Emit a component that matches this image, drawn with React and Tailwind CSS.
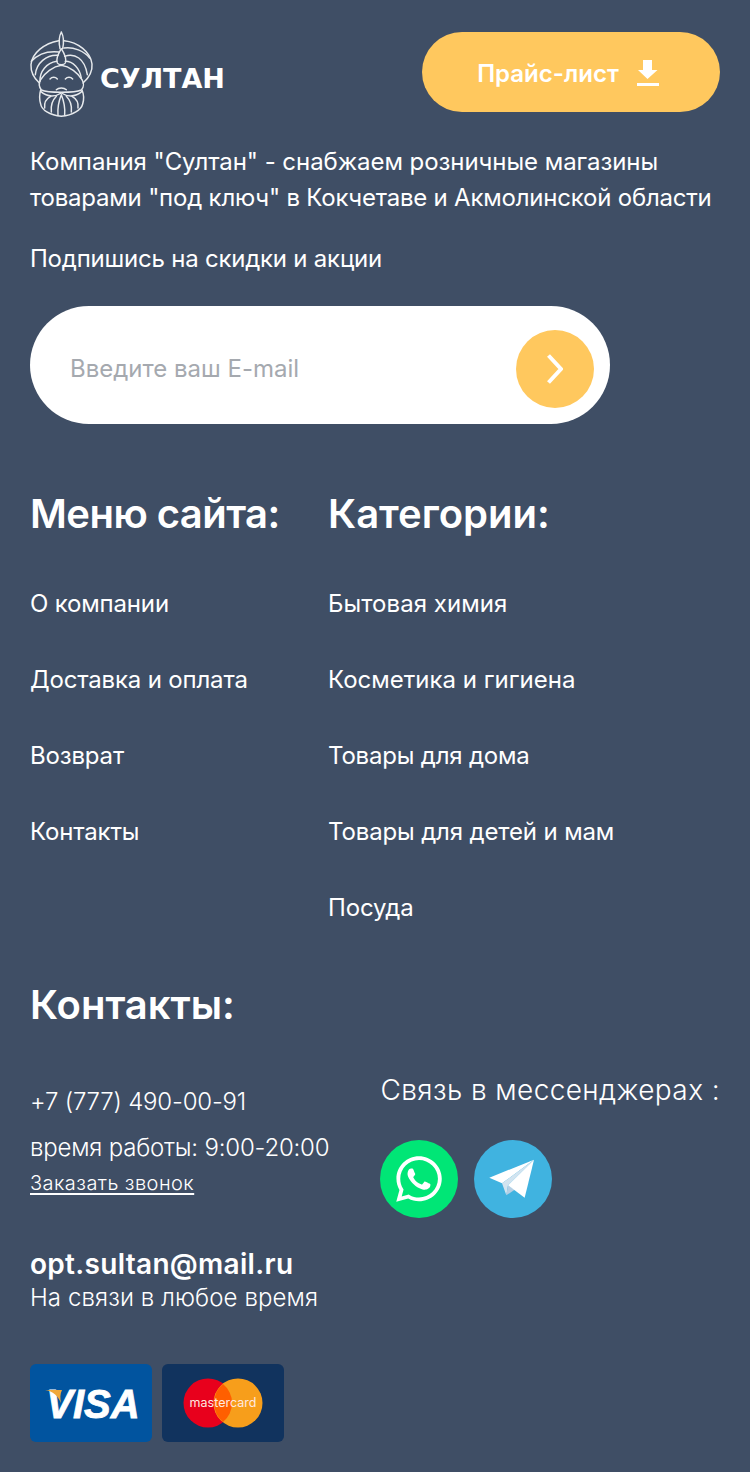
import { FaWhatsapp } from "react-icons/fa";

const menu = ["О компании", "Доставка и оплата", "Возврат", "Контакты"];
const categories = [
  { text: "Бытовая химия", cls: "tracking-[0.05px]" },
  { text: "Косметика и гигиена", cls: "" },
  { text: "Товары для дома", cls: "tracking-[-0.2px]" },
  { text: "Товары для детей и мам", cls: "tracking-[-0.14px]" },
  { text: "Посуда", cls: "tracking-[-0.15px]" },
];

function Logo() {
  return (
    <div className="-mt-[4px] -ml-[2px] flex items-center">
      <svg width="70" height="90" viewBox="0 0 210 270" fill="none" stroke="#e6e9ec" strokeWidth="4.400" strokeLinecap="round" strokeLinejoin="round">
        <path d="M100 12C93 25 93 48 96 62M100 12C107 25 107 48 104 62" />
        <path d="M100 62C90 78 84 95 88 105C92 112 108 112 112 105C116 95 110 78 100 62z" />
        <path d="M92 38C50 45 12 75 9 110C8 130 18 150 34 165" />
        <path d="M108 38C150 42 188 72 192 108C194 130 182 150 165 165" />
        <path d="M10 100C30 78 60 68 94 72M22 140C25 105 55 80 90 82M36 160C35 130 55 105 86 100" />
        <path d="M108 60C135 55 170 70 185 90M110 85C140 75 170 90 178 140M112 100C135 100 155 120 160 150" />
        <path d="M100 112C75 115 50 135 38 155C32 165 34 178 40 186C60 195 140 195 160 186C168 178 168 165 162 155C150 135 125 115 100 112z" />
        <path d="M66 153C72 146 82 146 88 153M112 153C118 146 128 146 134 153M85 185C92 178 108 178 115 185" />
        <path d="M38 186C34 200 34 215 38 228C40 245 65 262 100 265C135 262 160 245 164 228C168 215 168 200 162 186" />
        <path d="M38 190C60 210 85 205 100 195C115 205 140 210 162 190" />
        <path d="M50 240C48 225 55 212 68 205M70 252C68 235 72 218 85 205M90 262C88 240 92 220 100 200M110 262C112 240 108 220 100 200M130 252C132 235 128 218 115 205M150 240C152 225 145 212 132 205" />
      </svg>
      <span className="mt-[12px] ml-[2px] text-[27px] leading-[30px] font-bold whitespace-nowrap text-white [font-family:'DejaVu_Sans',sans-serif]">СУЛТАН</span>
    </div>
  );
}

function VisaCard() {
  return (
    <div className="flex h-[78px] w-[122px] items-center justify-center rounded-md bg-[#01549f]">
      <svg width="96" height="44" viewBox="0 0 96 44">
        <text x="50" y="37" textAnchor="middle" fill="#fff" stroke="#fff" strokeWidth="0.8" fontSize="40" fontWeight="700" fontStyle="italic" fontFamily="Liberation Sans, sans-serif">VISA</text>
        <path d="M2 9h17c-2 4-2 8-1 13-3-7-8-12-16-13z" fill="#f0a83a" />
      </svg>
    </div>
  );
}

function MasterCard() {
  return (
    <div className="flex h-[78px] w-[122px] items-center justify-center rounded-md bg-[#11335e]">
      <svg width="80" height="50" viewBox="0 0 80 50">
        <circle cx="25" cy="25" r="24.500" fill="#e8001c" />
        <circle cx="55" cy="25" r="24.500" fill="#f79e1b" />
        <path d="M40 6a24.500 24.500 0 0 1 0 38a24.500 24.500 0 0 1 0-38z" fill="#ff5f00" />
        <text x="40" y="29" textAnchor="middle" fill="#ffe9e0" fontSize="12.500" fontFamily="Inter, sans-serif">mastercard</text>
      </svg>
    </div>
  );
}

function TelegramIcon() {
  return (
    <svg width="46" height="40" viewBox="0 0 138 120">
      <path d="M135 2 1 56 39 73z" fill="#fff" />
      <path d="M135 2 39 73 52 109 57 79z" fill="#d2e4f0" />
      <path d="M52 109 57 79 77 92z" fill="#b5cfe4" />
      <path d="M135 2 57 79 107 116z" fill="#fff" />
    </svg>
  );
}

export default function App() {
  return (
    <div className="min-h-[1472px] bg-[#3f4e65] px-[30px] pt-[32px] text-white [font-family:Inter,sans-serif]">
      <div className="flex items-start justify-between">
        <Logo />
        <button className="flex h-[80px] w-[298px] items-center justify-center gap-[18px] rounded-full bg-[#ffc85e] pt-[4px] pr-[6px] text-[24px] font-semibold">
          Прайс-лист
          <svg className="-mt-[2px]" width="22" height="26" viewBox="0 0 22 26" fill="#fff">
            <path d="M6 0h9v10h5.500L10.500 19 1 10h5z" />
            <rect x="0" y="23" width="22" height="3" />
          </svg>
        </button>
      </div>

      <p className="mt-[26px] text-[24px] leading-[36px] whitespace-nowrap">
        <span className="tracking-[-0.06px]">Компания "Султан" - снабжаем розничные магазины</span>
        <br />
        <span className="tracking-[-0.21px]">товарами "под ключ" в Кокчетаве и Акмолинской области</span>
      </p>
      <p className="mt-[25px] text-[24px] leading-[36px] tracking-[-0.22px]">Подпишись на скидки и акции</p>

      <div className="mt-[29px] flex h-[118px] w-[580px] items-center justify-between rounded-full bg-white pt-[8px] pr-[16px] pl-[40px]">
        <span className="text-[24px] text-[#a5a9af]">Введите ваш E-mail</span>
        <div className="flex h-[78px] w-[78px] items-center justify-center rounded-full bg-[#ffc85e]">
          <svg width="16" height="30" viewBox="0 0 16 30" fill="none" stroke="#fff" strokeWidth="4">
            <path d="M1.500 1.500 14 15 1.500 28.500" />
          </svg>
        </div>
      </div>

      <div className="mt-[60px] flex gap-[48px]">
        <div className="w-[250px]">
          <h2 className="text-[40px] leading-[60px] font-semibold tracking-[-0.55px] whitespace-nowrap">Меню сайта:</h2>
          <ul className="mt-[42px] flex flex-col gap-[40px]">
            {menu.map((m) => (
              <li key={m} className="text-[24px] leading-[36px] tracking-[-0.17px]">{m}</li>
            ))}
          </ul>
        </div>
        <div>
          <h2 className="text-[40px] leading-[60px] font-semibold">Категории:</h2>
          <ul className="mt-[42px] flex flex-col gap-[40px]">
            {categories.map((c) => (
              <li key={c.text} className={`text-[24px] leading-[36px] ${c.cls}`}>{c.text}</li>
            ))}
          </ul>
        </div>
      </div>

      <h2 className="mt-[49px] text-[40px] leading-[60px] font-semibold">Контакты:</h2>

      <div className="mt-[37px] flex justify-between">
        <div className="pt-[12px] font-light">
          <p className="text-[24px] leading-[36px] tracking-[-0.2px]">+7 (777) 490-00-91</p>
          <p className="mt-[10px] text-[24px] leading-[36px] tracking-[-0.2px]">время работы: 9:00-20:00</p>
          <a className="mt-[5px] block text-[20px] leading-[24px] tracking-[0.45px] underline decoration-2 underline-offset-[3px]">Заказать звонок</a>
          <p className="mt-[51px] text-[28px] leading-[36px] font-semibold tracking-[0.3px]">opt.sultan@mail.ru</p>
          <p className="mt-[1px] text-[24px] leading-[30px] tracking-[0.1px]">На связи в любое время</p>
        </div>
        <div>
          <p className="text-[28px] leading-[36px] font-light tracking-[0.4px] whitespace-nowrap">Связь в мессенджерах :</p>
          <div className="mt-[32px] flex gap-[16px]">
            <div className="flex h-[78px] w-[78px] items-center justify-center rounded-full bg-[#00e676]">
              <FaWhatsapp size={52} className="text-white" />
            </div>
            <div className="flex h-[78px] w-[78px] items-center justify-center rounded-full bg-[#40b3e0] pr-[2px]">
              <TelegramIcon />
            </div>
          </div>
        </div>
      </div>

      <div className="mt-[51px] flex gap-[10px]">
        <VisaCard />
        <MasterCard />
      </div>
    </div>
  );
}
